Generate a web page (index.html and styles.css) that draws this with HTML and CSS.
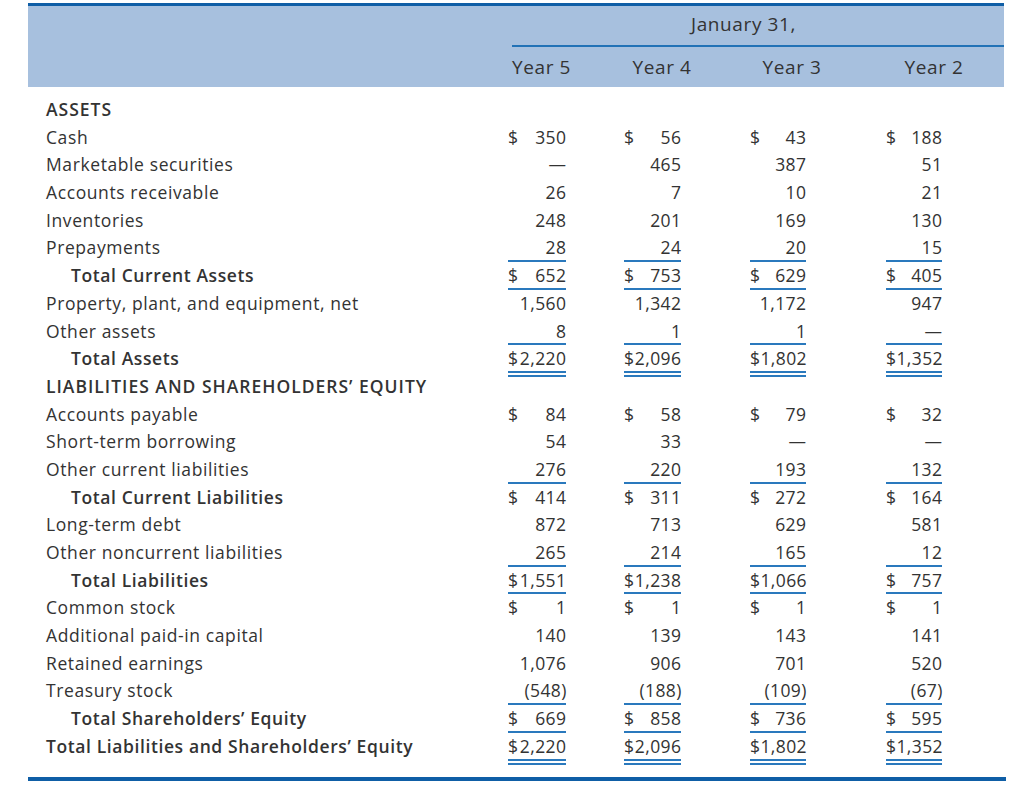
FILE: index.html
```html
<!DOCTYPE html>
<html>
<head>
<meta charset="utf-8">
<title>Balance Sheet</title>
<link rel="stylesheet" href="styles.css">
</head>
<body>
<div class="sheet">
  <div class="head">
    <div class="jan-row"><div class="jan">January 31,</div></div>
    <div class="year-row">
      <div class="yr y1">Year 5</div>
      <div class="yr y2">Year 4</div>
      <div class="yr y3">Year 3</div>
      <div class="yr y4">Year 2</div>
    </div>
  </div>

  <div class="body">
    <div class="row"><div class="lbl sec">ASSETS</div></div>

    <div class="row"><div class="lbl">Cash</div>
      <div class="n c1"><span>$</span><span>350</span></div>
      <div class="n c2"><span>$</span><span>56</span></div>
      <div class="n c3"><span>$</span><span>43</span></div>
      <div class="n c4"><span>$</span><span>188</span></div></div>

    <div class="row"><div class="lbl">Marketable securities</div>
      <div class="n c1 r"><span>—</span></div>
      <div class="n c2 r"><span>465</span></div>
      <div class="n c3 r"><span>387</span></div>
      <div class="n c4 r"><span>51</span></div></div>

    <div class="row"><div class="lbl">Accounts receivable</div>
      <div class="n c1 r"><span>26</span></div>
      <div class="n c2 r"><span>7</span></div>
      <div class="n c3 r"><span>10</span></div>
      <div class="n c4 r"><span>21</span></div></div>

    <div class="row"><div class="lbl">Inventories</div>
      <div class="n c1 r"><span>248</span></div>
      <div class="n c2 r"><span>201</span></div>
      <div class="n c3 r"><span>169</span></div>
      <div class="n c4 r"><span>130</span></div></div>

    <div class="row"><div class="lbl">Prepayments</div>
      <div class="n c1 r u"><span>28</span></div>
      <div class="n c2 r u"><span>24</span></div>
      <div class="n c3 r u"><span>20</span></div>
      <div class="n c4 r u"><span>15</span></div></div>

    <div class="row"><div class="lbl tot">Total Current Assets</div>
      <div class="n c1 u"><span>$</span><span>652</span></div>
      <div class="n c2 u"><span>$</span><span>753</span></div>
      <div class="n c3 u"><span>$</span><span>629</span></div>
      <div class="n c4 u"><span>$</span><span>405</span></div></div>

    <div class="row"><div class="lbl">Property, plant, and equipment, net</div>
      <div class="n c1 r"><span>1,560</span></div>
      <div class="n c2 r"><span>1,342</span></div>
      <div class="n c3 r"><span>1,172</span></div>
      <div class="n c4 r"><span>947</span></div></div>

    <div class="row"><div class="lbl">Other assets</div>
      <div class="n c1 r u"><span>8</span></div>
      <div class="n c2 r u"><span>1</span></div>
      <div class="n c3 r u"><span>1</span></div>
      <div class="n c4 r u"><span>—</span></div></div>

    <div class="row"><div class="lbl tot">Total Assets</div>
      <div class="n c1 uu"><span>$</span><span>2,220</span></div>
      <div class="n c2 uu"><span>$</span><span>2,096</span></div>
      <div class="n c3 uu"><span>$</span><span>1,802</span></div>
      <div class="n c4 uu"><span>$</span><span>1,352</span></div></div>

    <div class="row"><div class="lbl sec">LIABILITIES AND SHAREHOLDERS’ EQUITY</div></div>

    <div class="row"><div class="lbl">Accounts payable</div>
      <div class="n c1"><span>$</span><span>84</span></div>
      <div class="n c2"><span>$</span><span>58</span></div>
      <div class="n c3"><span>$</span><span>79</span></div>
      <div class="n c4"><span>$</span><span>32</span></div></div>

    <div class="row"><div class="lbl">Short-term borrowing</div>
      <div class="n c1 r"><span>54</span></div>
      <div class="n c2 r"><span>33</span></div>
      <div class="n c3 r"><span>—</span></div>
      <div class="n c4 r"><span>—</span></div></div>

    <div class="row"><div class="lbl">Other current liabilities</div>
      <div class="n c1 r u"><span>276</span></div>
      <div class="n c2 r u"><span>220</span></div>
      <div class="n c3 r u"><span>193</span></div>
      <div class="n c4 r u"><span>132</span></div></div>

    <div class="row"><div class="lbl tot">Total Current Liabilities</div>
      <div class="n c1"><span>$</span><span>414</span></div>
      <div class="n c2"><span>$</span><span>311</span></div>
      <div class="n c3"><span>$</span><span>272</span></div>
      <div class="n c4"><span>$</span><span>164</span></div></div>

    <div class="row"><div class="lbl">Long-term debt</div>
      <div class="n c1 r"><span>872</span></div>
      <div class="n c2 r"><span>713</span></div>
      <div class="n c3 r"><span>629</span></div>
      <div class="n c4 r"><span>581</span></div></div>

    <div class="row"><div class="lbl">Other noncurrent liabilities</div>
      <div class="n c1 r u"><span>265</span></div>
      <div class="n c2 r u"><span>214</span></div>
      <div class="n c3 r u"><span>165</span></div>
      <div class="n c4 r u"><span>12</span></div></div>

    <div class="row"><div class="lbl tot">Total Liabilities</div>
      <div class="n c1 u"><span>$</span><span>1,551</span></div>
      <div class="n c2 u"><span>$</span><span>1,238</span></div>
      <div class="n c3 u"><span>$</span><span>1,066</span></div>
      <div class="n c4 u"><span>$</span><span>757</span></div></div>

    <div class="row"><div class="lbl">Common stock</div>
      <div class="n c1"><span>$</span><span>1</span></div>
      <div class="n c2"><span>$</span><span>1</span></div>
      <div class="n c3"><span>$</span><span>1</span></div>
      <div class="n c4"><span>$</span><span>1</span></div></div>

    <div class="row"><div class="lbl">Additional paid-in capital</div>
      <div class="n c1 r"><span>140</span></div>
      <div class="n c2 r"><span>139</span></div>
      <div class="n c3 r"><span>143</span></div>
      <div class="n c4 r"><span>141</span></div></div>

    <div class="row"><div class="lbl">Retained earnings</div>
      <div class="n c1 r"><span>1,076</span></div>
      <div class="n c2 r"><span>906</span></div>
      <div class="n c3 r"><span>701</span></div>
      <div class="n c4 r"><span>520</span></div></div>

    <div class="row"><div class="lbl">Treasury stock</div>
      <div class="n c1 r u"><span>(548<span class="p">)</span></span></div>
      <div class="n c2 r u"><span>(188<span class="p">)</span></span></div>
      <div class="n c3 r u"><span>(109<span class="p">)</span></span></div>
      <div class="n c4 r u"><span>(67<span class="p">)</span></span></div></div>

    <div class="row"><div class="lbl tot">Total Shareholders’ Equity</div>
      <div class="n c1 u"><span>$</span><span>669</span></div>
      <div class="n c2 u"><span>$</span><span>858</span></div>
      <div class="n c3 u"><span>$</span><span>736</span></div>
      <div class="n c4 u"><span>$</span><span>595</span></div></div>

    <div class="row"><div class="lbl grand">Total Liabilities and Shareholders’ Equity</div>
      <div class="n c1 uu"><span>$</span><span>2,220</span></div>
      <div class="n c2 uu"><span>$</span><span>2,096</span></div>
      <div class="n c3 uu"><span>$</span><span>1,802</span></div>
      <div class="n c4 uu"><span>$</span><span>1,352</span></div></div>
  </div>

  <div class="rule"></div>
</div>
</body>
</html>
```

FILE: styles.css
```css
html, body {
  margin: 0;
  padding: 0;
  background: #ffffff;
}

body {
  font-family: "Open Sans", "Noto Sans", "Liberation Sans", sans-serif;
  font-size: 17.5px;
  font-weight: 500;
  letter-spacing: 0.6px;
  color: #333333;
}

.sheet {
  margin: 3px 0 0 28px;
  width: 976px;
}

.head {
  border-top: 3px solid #0f5ea6;
  background: #a7c0de;
  font-size: 19px;
}

.jan-row {
  display: grid;
  grid-template-columns: 484px 1fr;
  height: 39px;
  border-bottom: 2px solid transparent;
}

.jan {
  grid-column: 2;
  text-align: center;
  padding-right: 29px;
  line-height: 36px;
  border-bottom: 2px solid #2272b6;
  margin-bottom: -2px;
}

.year-row {
  display: grid;
  grid-template-columns: 463.5px 100px 20.5px 100px 30px 100px 42px 100px 1fr;
  height: 40px;
  align-items: center;
}

.yr {
  text-align: center;
  line-height: 40px;
  padding-bottom: 1px;
}

.y1 { grid-column: 2; }
.y2 { grid-column: 4; }
.y3 { grid-column: 6; }
.y4 { grid-column: 8; }

.body {
  margin-top: 9px;
}

.row {
  display: grid;
  grid-template-columns: 480px 58px 58px 57px 69px 56px 80px 56px 1fr;
  height: 27.7px;
  line-height: 27.7px;
}

.lbl {
  grid-column: 1;
  padding-left: 18px;
  white-space: nowrap;
}

.lbl.sec {
  font-weight: 560;
  letter-spacing: 1px;
}

.lbl.tot {
  padding-left: 43px;
  font-weight: 650;
}

.lbl.grand {
  font-weight: 650;
}

.n {
  display: flex;
  justify-content: space-between;
  white-space: nowrap;
  letter-spacing: 0.4px;
}

.n span:last-child {
  margin-right: -0.4px;
}

.n.r {
  justify-content: flex-end;
}

.c1 { grid-column: 2; }
.c2 { grid-column: 4; }
.c3 { grid-column: 6; }
.c4 { grid-column: 8; }

.u {
  box-shadow: inset 0 -2px 0 #2a79bd;
}

.uu {
  box-shadow: inset 0 -2px 0 #2a79bd, 0 2px 0 #ffffff, 0 4px 0 #2a79bd;
}

.p {
  margin-right: -5px;
}

.rule {
  margin-top: 16px;
  width: 978px;
  height: 4px;
  background: #0f5ea6;
}
```
